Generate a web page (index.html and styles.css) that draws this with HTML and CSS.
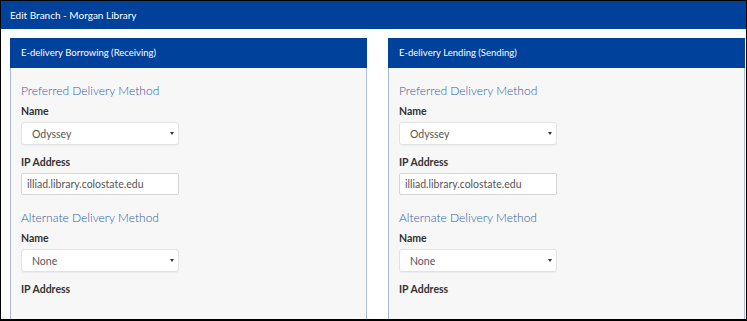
FILE: index.html
```html
<!DOCTYPE html>
<html lang="en">
<head>
  <meta charset="UTF-8" />
  <meta name="viewport" content="width=device-width, initial-scale=1.0"/>
  <title>Edit Branch - Morgan Library</title>

  <link rel="stylesheet" href="styles.css">
</head>
<body>
  <div class="frame">
    <div class="page-header">Edit Branch - Morgan Library</div>

    <div class="panels">
      <div class="panel">
        <div class="panel-header">E-delivery Borrowing (Receiving)</div>
        <div class="panel-body">
          <h3 class="section-title">Preferred Delivery Method</h3>
          <div class="field">
            <label>Name</label>
            <div class="select-wrap">
              <select>
                <option>Odyssey</option>
                <option>None</option>
              </select>
            </div>
          </div>
          <div class="field">
            <label>IP Address</label>
            <input type="text" value="illiad.library.colostate.edu">
          </div>

          <h3 class="section-title">Alternate Delivery Method</h3>
          <div class="field">
            <label>Name</label>
            <div class="select-wrap">
              <select>
                <option>None</option>
                <option>Odyssey</option>
              </select>
            </div>
          </div>
          <div class="field">
            <label>IP Address</label>
          </div>
        </div>
      </div>

      <div class="panel">
        <div class="panel-header">E-delivery Lending (Sending)</div>
        <div class="panel-body">
          <h3 class="section-title">Preferred Delivery Method</h3>
          <div class="field">
            <label>Name</label>
            <div class="select-wrap">
              <select>
                <option>Odyssey</option>
                <option>None</option>
              </select>
            </div>
          </div>
          <div class="field">
            <label>IP Address</label>
            <input type="text" value="illiad.library.colostate.edu">
          </div>

          <h3 class="section-title">Alternate Delivery Method</h3>
          <div class="field">
            <label>Name</label>
            <div class="select-wrap">
              <select>
                <option>None</option>
                <option>Odyssey</option>
              </select>
            </div>
          </div>
          <div class="field">
            <label>IP Address</label>
          </div>
        </div>
      </div>
    </div>
  </div>
</body>
</html>
```

FILE: styles.css
```css
* {
  box-sizing: border-box;
  margin: 0;
  padding: 0;
}

body {
  background-color: #fff;
  font-family: Lato, 'Open Sans', sans-serif;
  color: #333;
}

.frame {
  width: 747px;
  height: 321px;
  border: 1px solid #000;
  border-bottom-width: 2px;
  overflow: hidden;
}

.page-header {
  height: 28px;
  padding-left: 9px;
  background-color: #00419b;
  color: #fff;
  font-size: 10px;
  line-height: 28px;
}

.panels {
  display: grid;
  grid-template-columns: 357px 357px;
  gap: 21px;
  margin-top: 9px;
  padding-left: 9px;
}

.panel {
  background-color: #f7f7f7;
  border-left: 1px solid #a9b9cf;
  border-right: 1px solid #a9b9cf;
  height: 300px;
}

.panel-header {
  height: 30px;
  margin-left: -1px;
  margin-right: -1px;
  padding-left: 11px;
  background-color: #00419b;
  color: #fff;
  font-size: 9.5px;
  line-height: 30px;
}

.panel-body {
  padding: 15px 10px 0;
}

.section-title {
  font-size: 12px;
  font-weight: 300;
  line-height: 16px;
  color: #2f5c9e;
  margin-bottom: 5px;
}

.field + .section-title {
  margin-top: 15px;
}

.field {
  margin-bottom: 10px;
}

.field label {
  display: block;
  font-size: 10.5px;
  font-weight: 700;
  line-height: 14px;
  margin-bottom: 4px;
  color: #333;
}

.select-wrap {
  position: relative;
  width: 158px;
}

.select-wrap::after {
  content: '';
  position: absolute;
  right: 5px;
  top: 10px;
  border-left: 2px solid transparent;
  border-right: 2px solid transparent;
  border-top: 3px solid #333;
  pointer-events: none;
}

select {
  appearance: none;
  -webkit-appearance: none;
  display: block;
  width: 158px;
  height: 23px;
  padding-left: 10px;
  border: 1px solid #e2e2e2;
  border-radius: 3px;
  background-color: #fff;
  box-shadow: 0 1px 1px rgba(0, 0, 0, 0.04);
  font-family: inherit;
  font-size: 10.5px;
  color: #555;
}

input[type="text"] {
  display: block;
  width: 158px;
  height: 22px;
  padding-left: 5px;
  border: 1px solid #d6d6d6;
  border-radius: 2px;
  background-color: #fff;
  font-family: inherit;
  font-size: 10.5px;
  color: #555;
}
```
